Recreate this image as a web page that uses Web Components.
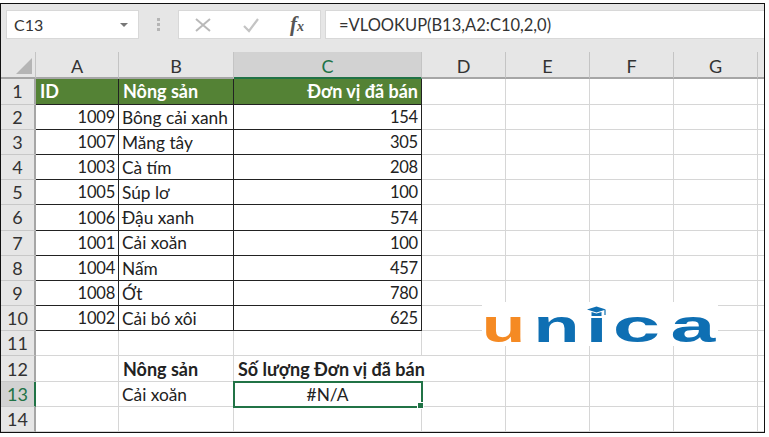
<!DOCTYPE html>
<html lang="vi"><head><meta charset="utf-8"><style>
html,body{margin:0;background:#fff;height:437px;overflow:hidden}
body{font-family:Lato,"Noto Sans",sans-serif;color:#222}
</style></head><body>
<x-window>
  <x-formula-bar cell="C13" formula="=VLOOKUP(B13,A2:C10,2,0)"></x-formula-bar>
  <x-sheet></x-sheet>
  <x-logo></x-logo>
</x-window>
<script>
class XWindow extends HTMLElement{constructor(){super();this.attachShadow({mode:'open'}).innerHTML=`<style>
:host{display:flex;flex-direction:column;position:relative;box-sizing:border-box;width:765px;height:430px;margin-top:3px;border:solid #111;border-width:1.5px 1.5px 1.5px 1px;background:#e6e6e6;overflow:hidden}
</style><slot></slot>`}}
class XFormulaBar extends HTMLElement{connectedCallback(){
const r=this.shadowRoot||this.attachShadow({mode:'open'});
r.innerHTML=`<style>
:host{display:flex;align-items:stretch;height:50px;box-sizing:border-box;padding:6px 0 13px 5px;background:#e6e6e6;font-size:16px;color:#333}
.box{background:#fff;border:1px solid #d8d8d8;box-sizing:border-box;display:flex;align-items:center}
.name{width:133px;padding:0 8px 0 7px;justify-content:space-between}
.arrow{width:0;height:0;border:4px solid transparent;border-top:4px solid #777;border-bottom:0;margin-right:2px}
.dots{width:39px;display:flex;flex-direction:column;align-items:center;justify-content:center;gap:2px}
.dots i{width:3px;height:3px;background:#b5b5b5;display:block}
.btns{width:143px;padding:0 16px 0 15px;justify-content:space-between}
.fx{font:italic bold 21px "Liberation Serif",serif;color:#555}
.input{flex:1;margin-left:4px;border-right:0;padding-left:13px;color:#333;font-size:16.5px}
</style>
<div class="box name"><span>${this.getAttribute('cell')}</span><span class="arrow"></span></div>
<div class="dots"><i></i><i></i><i></i></div>
<div class="box btns">
<svg width="18" height="18" viewBox="0 0 18 18" fill="none" stroke="#b9b9b9" stroke-width="2"><path d="M2 3L16 15M16 3L2 15"/></svg>
<svg width="18" height="18" viewBox="0 0 18 18" fill="none" stroke="#c4c4c4" stroke-width="2.2"><path d="M2 10L7 15L16 3"/></svg>
<span class="fx">f<span style="font-size:14px">x</span></span></div>
<div class="box input">${this.getAttribute('formula')}</div>`}}
class XSheet extends HTMLElement{connectedCallback(){
const r=this.shadowRoot||this.attachShadow({mode:'open'});
const data=[[1009,'Bông cải xanh',154],[1007,'Măng tây',305],[1003,'Cà tím',208],[1005,'Súp lơ',100],[1006,'Đậu xanh',574],[1001,'Cải xoăn',100],[1004,'Nấm',457],[1008,'Ớt',780],[1002,'Cải bó xôi',625]];
let h='<div class="ch corner"><i></i></div>';
for(const c of 'ABCDEFG')h+=`<div class="ch${c=='C'?' sel':''}">${c}</div>`;
h+='<div class="ch"></div>';
for(let n=1;n<=14;n++){
 h+=`<div class="rh${n==13?' sel':''}">${n}</div>`;
 let cells=['','','','','','','',''],cls=['','','','','','','',''];
 if(n==1){cells[0]='ID';cells[1]='Nông sản';cells[2]='Đơn vị đã bán';cls[0]=cls[1]='hd';cls[2]='hd rt'}
 else if(n<=10){const d=data[n-2];cells[0]=d[0];cells[1]=d[1];cells[2]=d[2];cls[0]=cls[2]='bd rt num';cls[1]='bd'}
 if(n==12){cells[1]='Nông sản';cells[2]='Số lượng Đơn vị đã bán';cls[1]='b';cls[2]='b over'}
 if(n==13){cells[1]='Cải xoăn';cells[2]='#N/A';cls[2]='active'}
 cells.forEach((t,i)=>{h+=`<div class="c ${cls[i]}"><span>${t}</span></div>`});
}
r.innerHTML=`<style>
:host{display:grid;flex:1;background:#fff;grid-template-columns:35px 83px 115px 188px 84px 84px 84px 84px 1fr;grid-template-rows:27px repeat(14,25.2px);font-size:17.3px;line-height:1;color:#222}
.ch{background:#e6e6e6;display:flex;align-items:center;justify-content:center;border-right:1px solid #c4c4c4;border-bottom:2.5px solid #a6a6a6;box-sizing:border-box;padding-top:2px;color:#333;font-size:18px}
.ch.sel{background:#d2d2d2;color:#217346;border-bottom-color:#217346}
.corner{position:relative}
.corner i{position:absolute;right:3px;bottom:3px;width:0;height:0;border-left:16px solid transparent;border-bottom:16px solid #b5b5b5}
.rh{background:#e6e6e6;display:flex;align-items:center;justify-content:center;border-right:2px solid #a6a6a6;border-bottom:1px solid #c8c8c8;box-sizing:border-box;font-size:18px;color:#333}
.rh.sel{background:#d2d2d2;color:#217346;border-right-color:#217346}
.c{border-right:1px solid #d6d6d6;border-bottom:1px solid #d6d6d6;box-sizing:border-box;display:flex;align-items:center;padding:1px 3px 0 3px;white-space:nowrap;min-width:0}
.rt{justify-content:flex-end}
.num{font-size:16.5px;letter-spacing:-.2px}
.hd{background:#548235;color:#fff;font-weight:700;font-size:18px;border-color:#222;border-bottom-color:#222;padding-top:0;padding-left:4px}
.bd{border-right:1px solid #222;border-bottom:1px solid #222}
.b{font-weight:700;font-size:18px;padding-left:4px}
.over{border-right-color:transparent}
.active{justify-content:center;outline:2.5px solid #217346;outline-offset:-1px;position:relative;z-index:1}
.active::after{content:"";position:absolute;right:-3px;bottom:-3px;width:5px;height:5px;background:#217346;border:1px solid #fff}
</style>${h}`;
}}
class XLogo extends HTMLElement{constructor(){super();this.attachShadow({mode:'open'}).innerHTML=`<style>
:host{position:absolute;left:481px;top:297.5px;width:236px;height:44px;background:#fff;display:flex;font:700 46px/48px "Liberation Sans",sans-serif;color:#0e6fb3}
span{display:block;text-align:center;height:44px}
.u{width:43px;color:#f58a23;transform:scaleX(1.55)}
.n{width:63px;transform:scaleX(1.65)}
.i{width:17px;transform:scaleX(1.7)}
.c{width:63px;transform:scaleX(1.85)}
.a{width:50px;transform:scaleX(1.75)}
svg{position:absolute;left:104px;top:3px;background:#fff}
</style><span class="u">u</span><span class="n">n</span><span class="i">i</span><span class="c">c</span><span class="a">a</span>
<svg width="21" height="13" viewBox="0 0 21 13" fill="#0e6fb3"><path d="M1 4.5L10.5 1.5L20 4.5L10.5 7.5Z"/><path d="M5.5 7L10.5 8.6L15.5 7V11H5.5Z"/><rect x="18.4" y="5" width="1.2" height="5"/></svg>`}}
customElements.define('x-window',XWindow);
customElements.define('x-formula-bar',XFormulaBar);
customElements.define('x-sheet',XSheet);
customElements.define('x-logo',XLogo);
</script></body></html>
